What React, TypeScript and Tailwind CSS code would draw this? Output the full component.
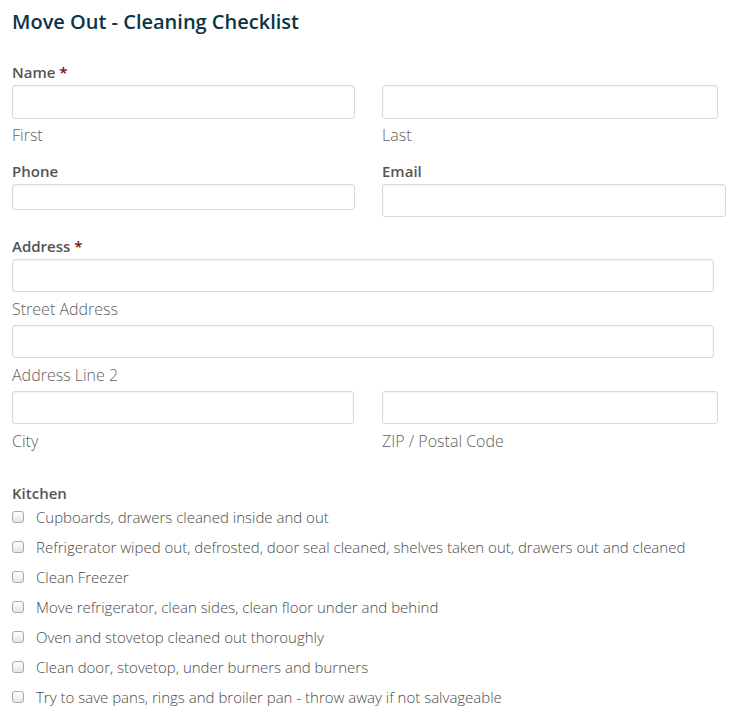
import React from "react";

const font = { fontFamily: '"Open Sans", "Liberation Sans", sans-serif' };

function Label({ children, required }: { children: React.ReactNode; required?: boolean }) {
  return (
    <div className="text-[15px] leading-[20px] font-semibold text-[#555555]">
      {children}
      {required && <span className="text-[#7a0a0a]"> *</span>}
    </div>
  );
}

function Sub({ children }: { children: React.ReactNode }) {
  return <div className="text-[16px] leading-[20px] font-light text-[#5f5f5f]">{children}</div>;
}

function Input({ className }: { className: string }) {
  return (
    <input
      type="text"
      className={`block rounded-[3px] border border-[#d9d9d9] bg-white shadow-[inset_0_1px_2px_rgba(0,0,0,0.06)] outline-none ${className}`}
    />
  );
}

const items = [
  "Cupboards, drawers cleaned inside and out",
  "Refrigerator wiped out, defrosted, door seal cleaned, shelves taken out, drawers out and cleaned",
  "Clean Freezer",
  "Move refrigerator, clean sides, clean floor under and behind",
  "Oven and stovetop cleaned out thoroughly",
  "Clean door, stovetop, under burners and burners",
  "Try to save pans, rings and broiler pan - throw away if not salvageable",
];

export default function App() {
  return (
    <div style={font} className="w-[736px] h-[717px] overflow-hidden bg-white pl-[12px]">
      <h1 className="pt-[8px] text-[20px] leading-[28px] font-semibold text-[#0c3448]">
        Move Out - Cleaning Checklist
      </h1>

      <div className="mt-[26px]">
        <Label required>Name</Label>
        <div className="flex gap-[27px] mt-[3px]">
          <div>
            <Input className="w-[343px] h-[34px]" />
            <div className="mt-[6px]"><Sub>First</Sub></div>
          </div>
          <div>
            <Input className="w-[336px] h-[34px]" />
            <div className="mt-[6px]"><Sub>Last</Sub></div>
          </div>
        </div>
      </div>

      <div className="flex gap-[27px] mt-[16px] items-start">
        <div>
          <Label>Phone</Label>
          <Input className="w-[343px] h-[26px] mt-[3px]" />
        </div>
        <div>
          <Label>Email</Label>
          <Input className="w-[344px] h-[33px] mt-[3px]" />
        </div>
      </div>

      <div className="mt-[19px]">
        <Label required>Address</Label>
        <Input className="w-[702px] h-[33px] mt-[3px]" />
        <div className="mt-[7px]"><Sub>Street Address</Sub></div>
        <Input className="w-[702px] h-[33px] mt-[6px]" />
        <div className="mt-[7px]"><Sub>Address Line 2</Sub></div>
        <div className="flex gap-[28px] mt-[6px]">
          <div>
            <Input className="w-[342px] h-[33px]" />
            <div className="mt-[7px]"><Sub>City</Sub></div>
          </div>
          <div>
            <Input className="w-[336px] h-[33px]" />
            <div className="mt-[7px]"><Sub>ZIP / Postal Code</Sub></div>
          </div>
        </div>
      </div>

      <div className="mt-[32px]">
        <Label>Kitchen</Label>
        <ul className="-mt-[1px]">
          {items.map((t) => (
            <li key={t} className="flex items-center h-[30px]">
              <span className="w-[12px] h-[12px] rounded-[3px] border border-[#a8a8a8] bg-gradient-to-b from-white to-[#e6e6e6] shrink-0" />
              <span className="ml-[12px] text-[15px] leading-[20px] font-light text-[#4a4a4a]">{t}</span>
            </li>
          ))}
        </ul>
      </div>
    </div>
  );
}
